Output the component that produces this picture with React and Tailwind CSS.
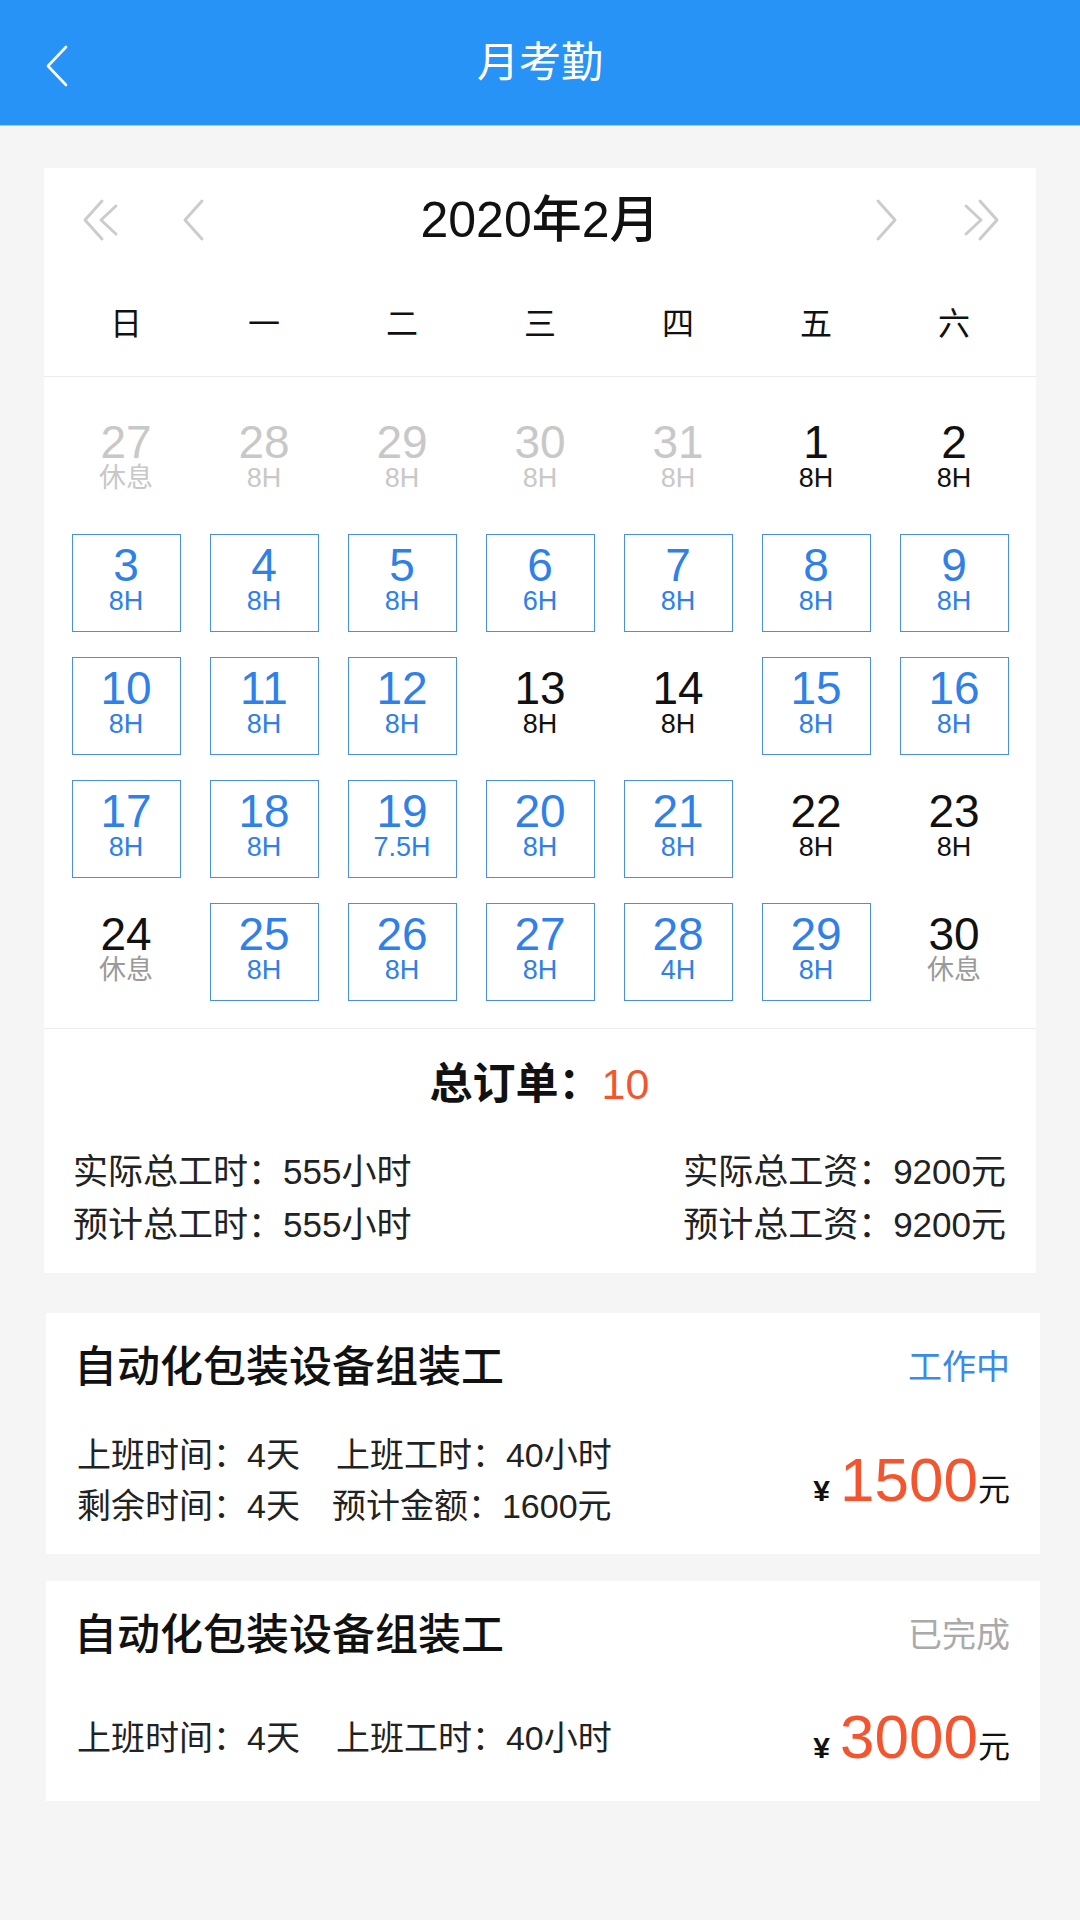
const FONT = { fontFamily: '"Liberation Sans", "Noto Sans CJK SC", sans-serif' };

const rows = [
  [
    { d: 27, h: '休息', t: 'out' },
    { d: 28, h: '8H', t: 'out' },
    { d: 29, h: '8H', t: 'out' },
    { d: 30, h: '8H', t: 'out' },
    { d: 31, h: '8H', t: 'out' },
    { d: 1, h: '8H', t: 'plain' },
    { d: 2, h: '8H', t: 'plain' },
  ],
  [
    { d: 3, h: '8H', t: 'box' },
    { d: 4, h: '8H', t: 'box' },
    { d: 5, h: '8H', t: 'box' },
    { d: 6, h: '6H', t: 'box' },
    { d: 7, h: '8H', t: 'box' },
    { d: 8, h: '8H', t: 'box' },
    { d: 9, h: '8H', t: 'box' },
  ],
  [
    { d: 10, h: '8H', t: 'box' },
    { d: 11, h: '8H', t: 'box' },
    { d: 12, h: '8H', t: 'box' },
    { d: 13, h: '8H', t: 'plain' },
    { d: 14, h: '8H', t: 'plain' },
    { d: 15, h: '8H', t: 'box' },
    { d: 16, h: '8H', t: 'box' },
  ],
  [
    { d: 17, h: '8H', t: 'box' },
    { d: 18, h: '8H', t: 'box' },
    { d: 19, h: '7.5H', t: 'box' },
    { d: 20, h: '8H', t: 'box' },
    { d: 21, h: '8H', t: 'box' },
    { d: 22, h: '8H', t: 'plain' },
    { d: 23, h: '8H', t: 'plain' },
  ],
  [
    { d: 24, h: '休息', t: 'rest' },
    { d: 25, h: '8H', t: 'box' },
    { d: 26, h: '8H', t: 'box' },
    { d: 27, h: '8H', t: 'box' },
    { d: 28, h: '4H', t: 'box' },
    { d: 29, h: '8H', t: 'box' },
    { d: 30, h: '休息', t: 'rest' },
  ],
];

const weekdays = ['日', '一', '二', '三', '四', '五', '六'];

function Chevron({ dir = 'left', double = false }) {
  const one = dir === 'left' ? 'M22 3 L5 22 L22 41' : 'M6 3 L23 22 L6 41';
  const two = dir === 'left' ? 'M36 8 L21 22 L36 36' : 'M-8 8 L7 22 L-8 36';
  return (
    <svg
      width={double ? 44 : 28}
      height="44"
      viewBox={double ? (dir === 'left' ? '0 0 44 44' : '-16 0 44 44') : '0 0 28 44'}
      fill="none"
      stroke="#cccccc"
      strokeWidth="3"
      strokeLinecap="round"
      strokeLinejoin="round"
    >
      <path d={one} />
      {double && <path d={two} />}
    </svg>
  );
}

function DayCell({ cell }) {
  const numColor =
    cell.t === 'out' ? 'text-[#c8c8c8]' : cell.t === 'box' ? 'text-[#2f80e8]' : 'text-[#111111]';
  const subColor =
    cell.t === 'out'
      ? 'text-[#c8c8c8]'
      : cell.t === 'box'
      ? 'text-[#2f80e8]'
      : cell.t === 'rest'
      ? 'text-[#9a9a9a]'
      : 'text-[#111111]';
  return (
    <div className="h-[123px] flex items-center justify-center">
      <div
        className={`w-[109px] h-[98px] flex flex-col items-center justify-center pb-[6px] ${
          cell.t === 'box' ? 'border-[1.5px] border-[#4a8fe6]' : ''
        }`}
      >
        <span className={`text-[46px] leading-[40px] ${numColor}`}>{cell.d}</span>
        <span className={`mt-[2px] text-[27px] leading-[28px] ${subColor}`}>{cell.h}</span>
      </div>
    </div>
  );
}

function JobCard({ status, statusColor, lines, price, className = '', infoClass = '' }) {
  return (
    <div className={`bg-white ml-[46px] mr-[40px] pl-[28px] pr-[30px] ${className}`}>
      <div className="flex items-center justify-between h-[50px]">
        <span className="text-[43px] leading-[50px] font-medium text-[#111111]">自动化包装设备组装工</span>
        <span className={`text-[34px] leading-[50px] ${statusColor}`}>{status}</span>
      </div>
      <div className={`flex items-center justify-between ${infoClass}`}>
        <div className="flex flex-col text-[34px] leading-[51px] text-[#222222] pl-[3px]">
          {lines.map((l, i) => (
            <div key={i} className="flex">
              <span>{l[0]}</span>
              <span className={i === 0 ? 'ml-[36px]' : 'ml-[32px]'}>{l[1]}</span>
            </div>
          ))}
        </div>
        <div className="flex items-baseline">
          <span className="text-[30px] font-bold text-[#111111] mr-[10px]">¥</span>
          <span className="text-[62px] leading-[64px] text-[#f4552f]">{price}</span>
          <span className="text-[32px] text-[#111111]">元</span>
        </div>
      </div>
    </div>
  );
}

export default function App() {
  return (
    <div className="min-h-[1920px] bg-[#f5f5f5] pb-[40px]" style={FONT}>
      {/* Header */}
      <div className="h-[126px] bg-[#2893f6] border-b border-[#9fd0fb] grid grid-cols-[1fr_auto_1fr] items-center">
        <div className="pl-[44px] pt-[6px]">
          <svg width="26" height="42" viewBox="0 0 26 42" fill="none" stroke="#ffffff" strokeWidth="2.6" strokeLinecap="round" strokeLinejoin="round">
            <path d="M22 2 L4 21 L22 40" />
          </svg>
        </div>
        <span className="text-[42px] text-white leading-none">月考勤</span>
        <div />
      </div>

      {/* Calendar card */}
      <div className="bg-white mx-[44px] mt-[42px]">
        <div className="h-[104px] flex items-center justify-between pl-[36px] pr-[34px]">
          <div className="flex items-center gap-[56px]">
            <Chevron dir="left" double />
            <Chevron dir="left" />
          </div>
          <span className="text-[50px] font-medium text-[#111111] leading-none">2020年2月</span>
          <div className="flex items-center gap-[58px]">
            <Chevron dir="right" />
            <Chevron dir="right" double />
          </div>
        </div>
        <div className="h-[105px] grid grid-cols-7 px-[13px] border-b border-[#ececec] items-center">
          {weekdays.map((w) => (
            <span key={w} className="text-center text-[32px] text-[#111111]">
              {w}
            </span>
          ))}
        </div>
        <div className="px-[13px] pt-[21px] pb-[15px] border-b border-[#ececec]">
          {rows.map((r, i) => (
            <div key={i} className="grid grid-cols-7">
              {r.map((c, j) => (
                <DayCell key={j} cell={c} />
              ))}
            </div>
          ))}
        </div>
        <div className="pt-[33px] pb-[22px] pl-[29px] pr-[30px]">
          <div className="flex justify-center items-center h-[44px] text-[43px]">
            <span className="font-semibold text-[#111111]">总订单：</span>
            <span className="text-[#f4552f]">10</span>
          </div>
          <div className="mt-[39px] flex justify-between text-[35px] leading-[53px] text-[#222222]">
            <div className="flex flex-col">
              <span>实际总工时：555小时</span>
              <span>预计总工时：555小时</span>
            </div>
            <div className="flex flex-col items-end">
              <span>实际总工资：9200元</span>
              <span>预计总工资：9200元</span>
            </div>
          </div>
        </div>
      </div>

      <JobCard
        className="mt-[40px] pt-[29px] pb-[22px]"
        infoClass="mt-[38px]"
        status="工作中"
        statusColor="text-[#3a8ae8]"
        lines={[
          ['上班时间：4天', '上班工时：40小时'],
          ['剩余时间：4天', '预计金额：1600元'],
        ]}
        price="1500"
      />
      <JobCard
        className="mt-[27px] pt-[29px] pb-[30px]"
        infoClass="mt-[45px]"
        status="已完成"
        statusColor="text-[#aaaaaa]"
        lines={[['上班时间：4天', '上班工时：40小时']]}
        price="3000"
      />
    </div>
  );
}
